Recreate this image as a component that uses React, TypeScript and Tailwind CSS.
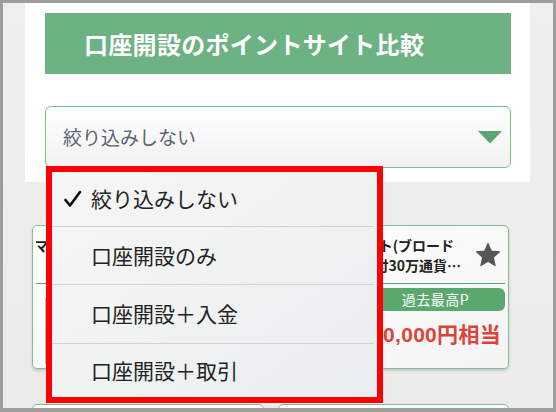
import React from "react";

const jp = "font-['Noto_Sans_CJK_JP','Noto_Sans',sans-serif]";

function Star() {
  return (
    <svg width="26" height="24" viewBox="0 0 24 23">
      <polygon
        points="12,0.5 15.2,7.6 23,8.4 17.2,13.7 18.8,21.5 12,17.6 5.2,21.5 6.8,13.7 1,8.4 8.8,7.6"
        fill="#555555"
        stroke="#555555"
        strokeWidth="1"
        strokeLinejoin="round"
      />
    </svg>
  );
}

function Card({
  line1,
  line2,
  line1Pad,
  amount,
}: {
  line1: string;
  line2: string;
  line1Pad: string;
  amount: string;
}) {
  return (
    <div className="h-[144px] rounded-[5px] border border-[#7dbf91] bg-gradient-to-br from-white to-[#f3f3f3] shadow-[0_2px_3px_rgba(0,0,0,0.15)] px-[3px] pt-[9px]">
      <div className="flex items-center">
        <div className="min-w-0 flex-1 text-[14px] leading-[20px] font-bold text-[#222]">
          <div className={`flex justify-end overflow-hidden whitespace-nowrap ${line1Pad}`}>
            <span className="shrink-0">{line1}</span>
          </div>
          <div className="flex justify-end overflow-hidden whitespace-nowrap">
            <span className="shrink-0">{line2}</span>
          </div>
        </div>
        <div className="ml-[14px] mr-[4px] flex w-[26px] justify-center">
          <Star />
        </div>
      </div>
      <div className="mt-[8px] h-px bg-[#5aa66e]" />
      <div className="flex">
        <div className="w-[84px] pl-[9px] pt-[14px]">
          <div className="h-[66px] border-l border-[#bbbbbb]" />
        </div>
        <div className="min-w-0 flex-1">
          <div className="mt-[4px] flex h-[23px] items-center justify-center rounded-[6px] bg-[#5aa86e] text-[14px] text-white tracking-[0.5px]">
            過去最高P
          </div>
          <div className="mt-[10px] flex justify-end overflow-hidden whitespace-nowrap pr-[4px] text-[21px] leading-[28px] font-bold tracking-[0.3px] text-[#dc4339] font-['Liberation_Sans','Noto_Sans_CJK_JP',sans-serif]">
            <span className="shrink-0">{amount}</span>
          </div>
        </div>
      </div>
    </div>
  );
}

function Check() {
  return (
    <svg width="18" height="18" viewBox="0 0 18 18">
      <path d="M1.5 10 L6 15.5 L16 2" fill="none" stroke="#111" strokeWidth="2.6" strokeLinecap="round" strokeLinejoin="round" />
    </svg>
  );
}

export default function App() {
  return (
    <div className={`w-[556px] h-[412px] bg-[#9d9d9d] pt-[3px] pl-[3px] pr-[3px] pb-[4px] ${jp}`}>
      <div className="relative h-full w-full overflow-hidden bg-gradient-to-b from-[#efefef] to-[#ebebeb]">
        {/* top white panel */}
        <div className="ml-[22px] h-[179px] w-[505px] bg-white pl-[20px] pt-[10px]">
          <div className="flex h-[61px] w-[466px] items-center bg-[#6cb283] pl-[39px] text-[24px] font-bold text-white tracking-[0.3px]">
            口座開設のポイントサイト比較
          </div>
          <div className="mt-[32px] flex h-[62px] w-[466px] items-center justify-between rounded-[6px] border border-[#78bb8c] bg-gradient-to-b from-white to-[#f1f1f1] pl-[17px] pr-[8px]">
            <span className="text-[19px] text-[#5b6274]">絞り込みしない</span>
            <svg width="24" height="13" viewBox="0 0 24 13">
              <polygon points="0,0 24,0 12,12.5" fill="#5aa66e" />
            </svg>
          </div>
        </div>

        {/* cards */}
        <div className="ml-[29px] mt-[43px] grid w-[477px] grid-cols-[232px_231px] gap-x-[14px] gap-y-[35px]">
          <Card
            line1="マネックス証券（口座開設）"
            line2="万円以上の入金で…"
            line1Pad="pr-[0px]"
            amount="5,000円相当"
          />
          <Card
            line1="みんなのFXネクスト(ブロード"
            line2="ネット)取引付30万通貨…"
            line1Pad="pr-[7px]"
            amount="10,000円相当"
          />
          <div className="h-[144px] rounded-[5px] border border-[#7dbf91] bg-white" />
          <div className="h-[144px] rounded-[5px] border border-[#7dbf91] bg-white" />
        </div>

        {/* dropdown menu overlay */}
        <div className="absolute left-[43px] top-[163px] flex h-[237px] w-[337px] flex-col border-[6px] border-[#ff0000] bg-gradient-to-br from-[#f6f6f6] via-[#f1f2f2] to-[#e9eef0] text-[21px] text-[#222]">
          <div className="flex h-[54px] items-center pl-[12px]">
            <span className="w-[27px]">
              <Check />
            </span>
            <span>絞り込みしない</span>
          </div>
          <div className="mr-[3px] flex h-[58px] items-center border-t border-[#d2d2d2] pl-[39px]">口座開設のみ</div>
          <div className="mr-[3px] flex h-[59px] items-center border-t border-[#d2d2d2] pl-[39px]">口座開設＋入金</div>
          <div className="mr-[3px] flex flex-1 items-center border-t border-[#d2d2d2] pl-[39px]">口座開設＋取引</div>
        </div>
      </div>
    </div>
  );
}
